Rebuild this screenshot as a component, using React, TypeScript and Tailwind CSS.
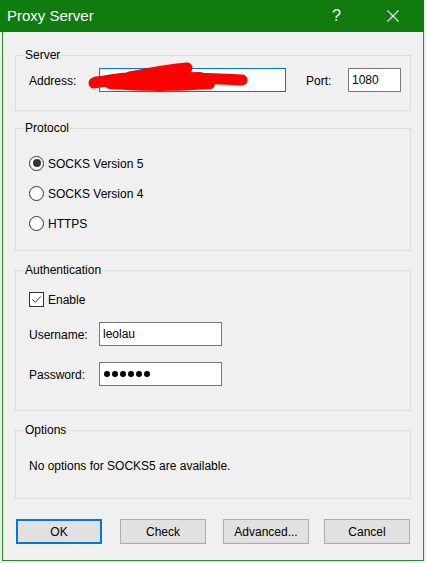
import React from 'react';

// Windows-style "Proxy Server" dialog

const Group = ({ label, className, children }: { label: string; className: string; children?: React.ReactNode }) => (
  <div className={`relative border border-[#dcdcdc] ${className}`}>
    <span className="absolute -top-[8px] left-[8px] bg-[#f0f0f0] px-[1px] text-[12px] leading-[14px]">{label}</span>
    {children}
  </div>
);

const Radio = ({ checked, label }: { checked?: boolean; label: string }) => (
  <div className="flex h-[30px] items-center">
    <span className="flex h-[15px] w-[15px] items-center justify-center rounded-full border border-[#333333] bg-white">
      {checked && <span className="h-[8px] w-[8px] rounded-full bg-[#333333]" />}
    </span>
    <span className="ml-[4px] pt-[1px] text-[12px]">{label}</span>
  </div>
);

const Button = ({ label, primary, className }: { label: string; primary?: boolean; className: string }) => (
  <button
    className={`h-[25px] w-[86px] bg-[#e1e1e1] text-[12px] ${
      primary ? 'border-2 border-[#0078d7]' : 'border border-[#adadad]'
    } ${className}`}
  >
    {label}
  </button>
);

export default function App() {
  return (
    <div className="relative h-[563px] w-[426px] overflow-hidden bg-[#ececec] font-['Liberation_Sans',Arial,sans-serif] text-black">
      {/* title bar */}
      <div className="flex h-[32px] w-[424px] items-center bg-[#107c10] pl-[7px] text-white">
        <span className="text-[15px]">Proxy Server</span>
        <span className="ml-auto mr-[46px] text-[16px]">?</span>
        <svg width="12" height="12" viewBox="0 0 12 12" className="mr-[25px]">
          <path d="M0.5 0.5 L11.5 11.5 M11.5 0.5 L0.5 11.5" stroke="white" strokeWidth="1.1" />
        </svg>
      </div>

      {/* window body */}
      <div className="ml-[2px] h-[529px] w-[422px] border-x border-b border-[#2a8f2a] bg-[#f0f0f0] px-[12px] pt-[23px]">
        <Group label="Server" className="h-[56px] pl-[13px] pt-[12px]">
          <div className="flex h-[24px] items-center text-[12px]">
            <span className="w-[70px] pt-[1px]">Address:</span>
            <div className="h-[24px] w-[187px] border border-[#0078d7] bg-white" />
            <span className="ml-[20px] w-[42px] pt-[1px]">Port:</span>
            <div className="flex h-[24px] w-[53px] items-center border border-[#7a7a7a] bg-white pl-[3px]">1080</div>
          </div>
        </Group>

        <Group label="Protocol" className="mt-[17px] h-[123px] pl-[13px] pt-[19px]">
          <Radio checked label="SOCKS Version 5" />
          <Radio label="SOCKS Version 4" />
          <Radio label="HTTPS" />
        </Group>

        <Group label="Authentication" className="mt-[19px] h-[141px] pl-[13px] pt-[21px]">
          <div className="flex h-[15px] items-center">
            <span className="flex h-[15px] w-[15px] items-center justify-center border border-[#333333] bg-white">
              <svg width="11" height="11" viewBox="0 0 11 11">
                <path d="M1.5 5.5 L4.3 8.3 L9.8 2.5" fill="none" stroke="#333333" strokeWidth="1" />
              </svg>
            </span>
            <span className="ml-[4px] pt-[1px] text-[12px]">Enable</span>
          </div>
          <div className="mt-[15px] flex h-[24px] items-center text-[12px]">
            <span className="w-[70px] pt-[1px]">Username:</span>
            <div className="flex h-[24px] w-[123px] items-center border border-[#7a7a7a] bg-white pl-[3px]">leolau</div>
          </div>
          <div className="mt-[16px] flex h-[24px] items-center text-[12px]">
            <span className="w-[70px] pt-[1px]">Password:</span>
            <div className="flex h-[24px] w-[123px] items-center gap-[2px] border border-[#7a7a7a] bg-white pl-[4px]">
              <span className="h-[6px] w-[6px] rounded-full bg-black" />
              <span className="h-[6px] w-[6px] rounded-full bg-black" />
              <span className="h-[6px] w-[6px] rounded-full bg-black" />
              <span className="h-[6px] w-[6px] rounded-full bg-black" />
              <span className="h-[6px] w-[6px] rounded-full bg-black" />
              <span className="h-[6px] w-[6px] rounded-full bg-black" />
            </div>
          </div>
        </Group>

        <Group label="Options" className="mt-[19px] flex h-[69px] items-center pl-[13px] pt-[2px]">
          <span className="text-[12px]">No options for SOCKS5 are available.</span>
        </Group>

        <div className="mt-[20px] flex">
          <Button primary label="OK" className="ml-[1px]" />
          <Button label="Check" className="ml-[18px]" />
          <Button label="Advanced..." className="ml-[17px]" />
          <Button label="Cancel" className="ml-[15px]" />
        </div>
      </div>

      {/* red scribble hiding the address */}
      <svg className="pointer-events-none absolute left-0 top-0" width="426" height="563">
        <g fill="none" stroke="#ff0000" strokeLinecap="round" strokeLinejoin="round">
          <path d="M94 83 Q 120 77 150 77 T 242 80" strokeWidth="11" />
          <path d="M110 84 Q 160 88 210 84" strokeWidth="10" />
          <path d="M130 77 Q 165 70 187 68" strokeWidth="11" />
          <path d="M96 82 L 140 79" strokeWidth="11" />
          <path d="M150 80 L 200 78" strokeWidth="12" />
        </g>
      </svg>
    </div>
  );
}
